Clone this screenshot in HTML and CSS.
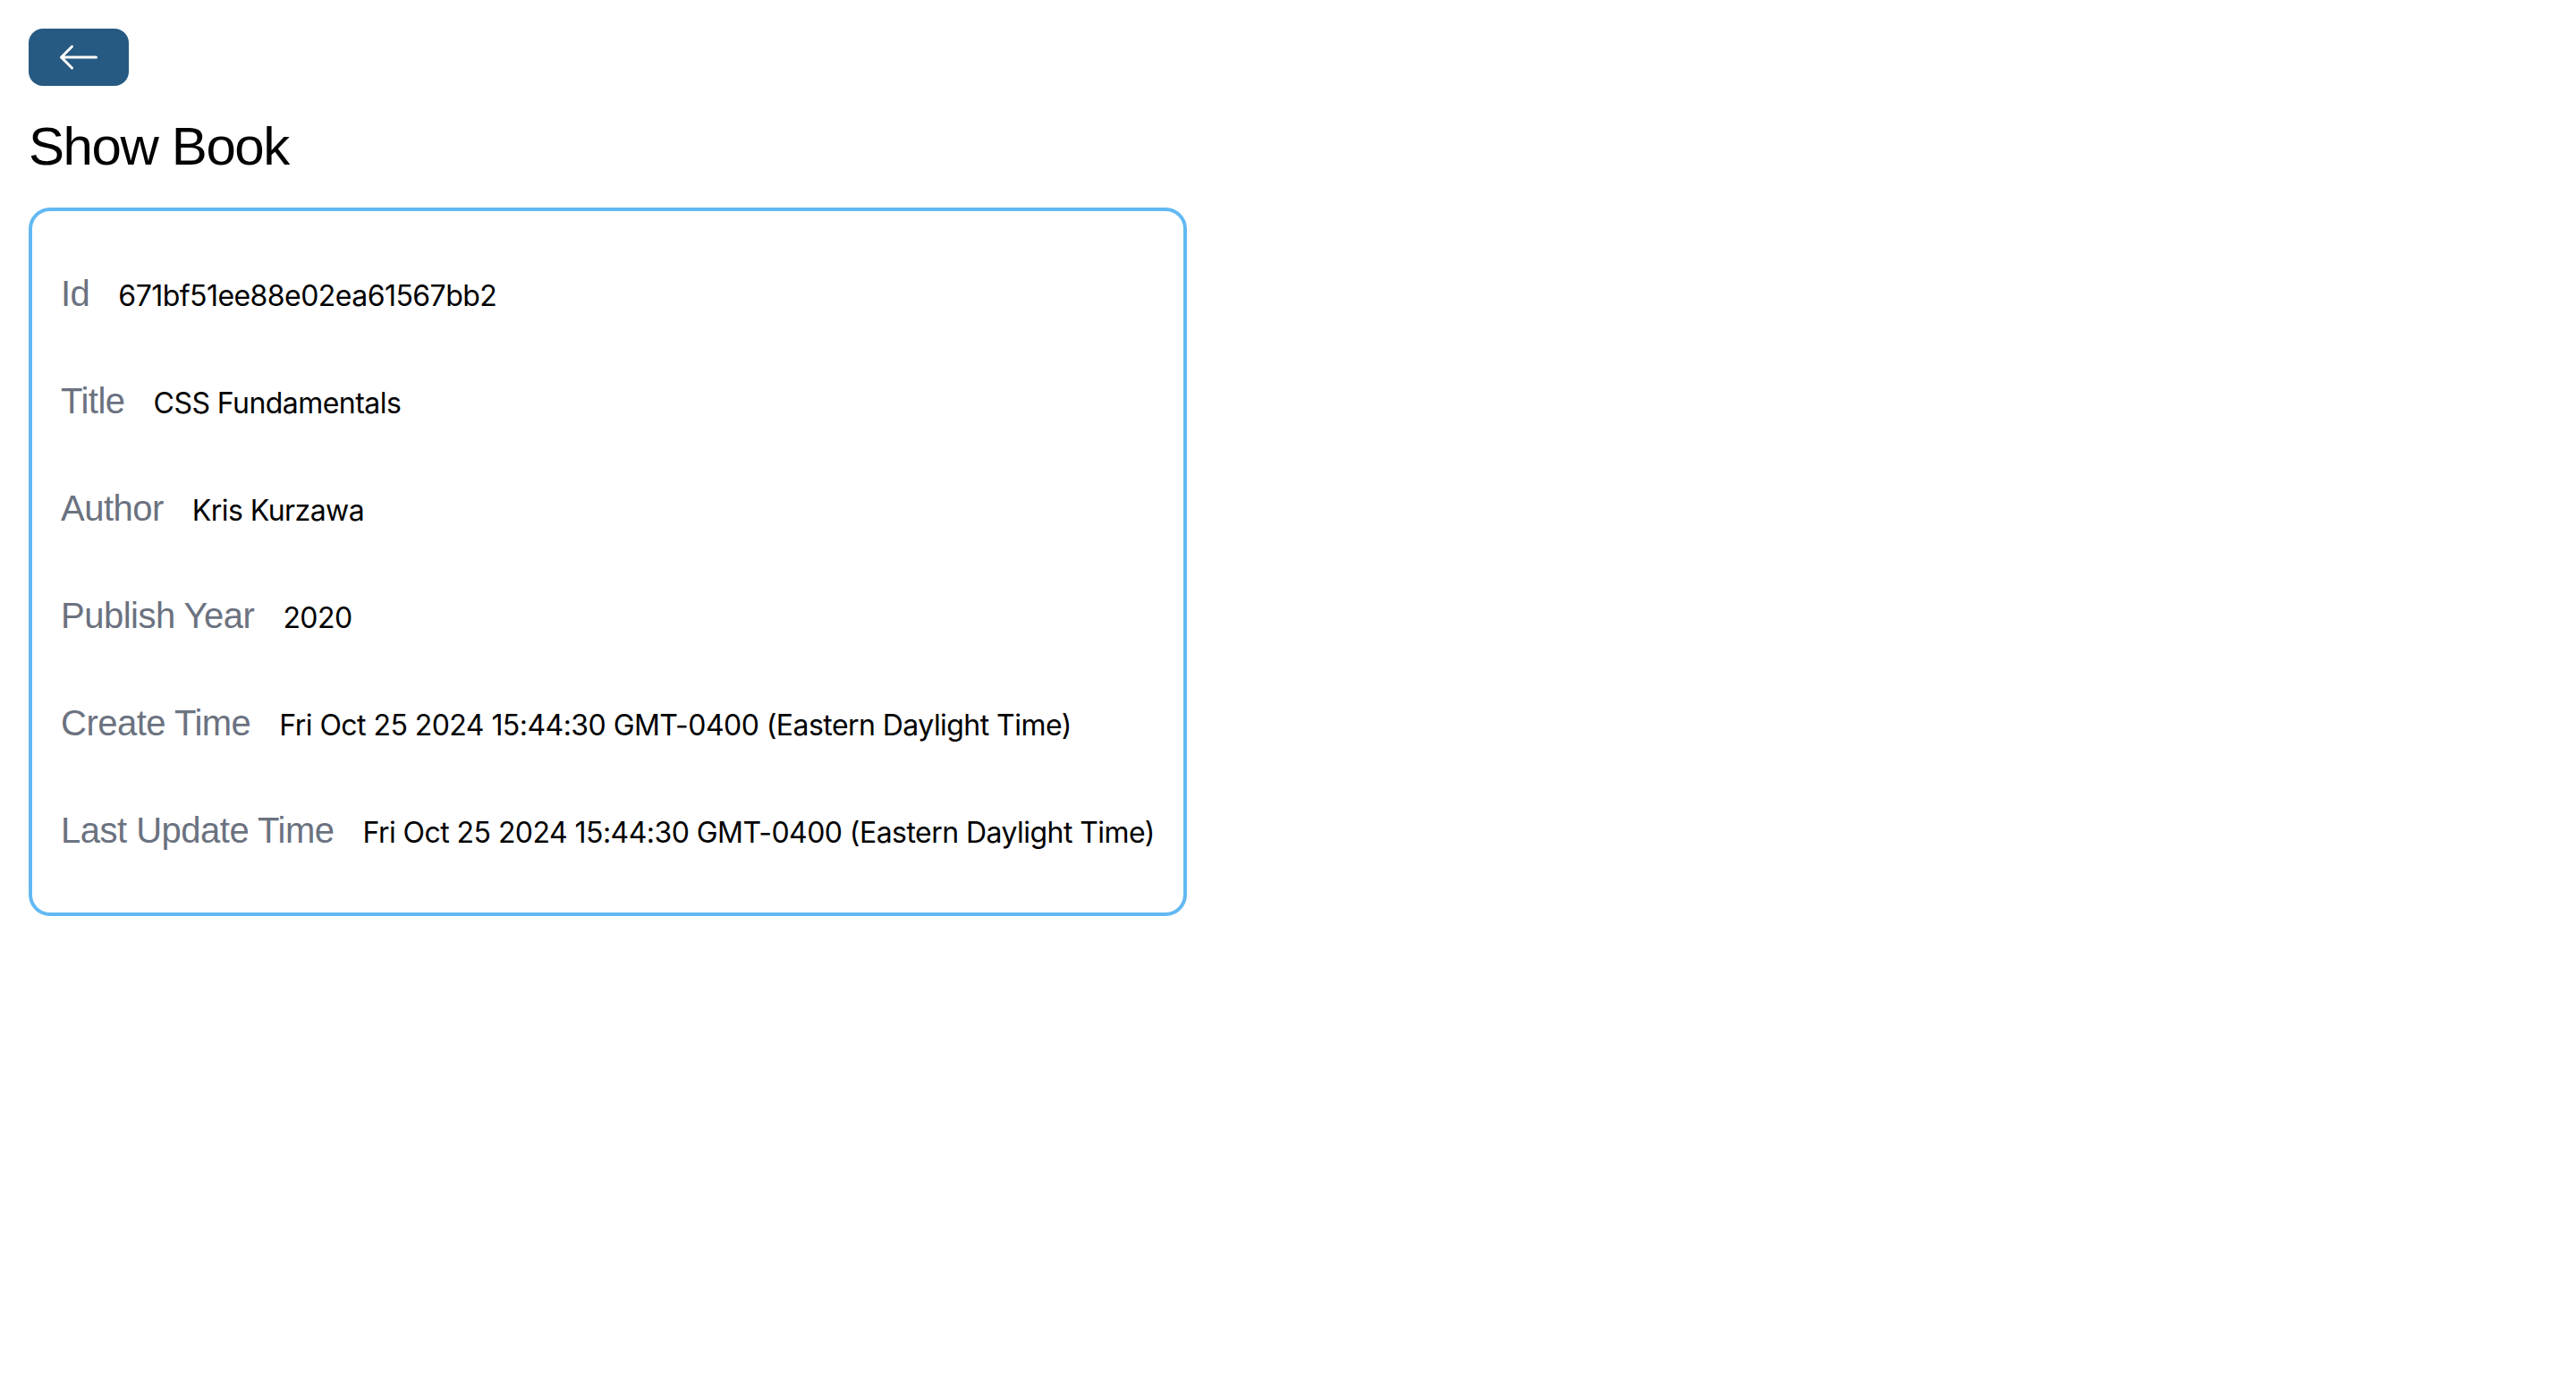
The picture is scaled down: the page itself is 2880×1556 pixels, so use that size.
FILE: index.html
```html
<!DOCTYPE html>
<html>
<head>
<meta charset="utf-8">
<link rel="stylesheet" href="styles.css">
</head>
<body>
<div class="page">
  <div class="back-row">
    <a class="back-btn" href="#">
      <svg class="back-icon" viewBox="0 0 16 16" fill="currentColor"><path fill-rule="evenodd" d="M15 8a.5.5 0 0 0-.5-.5H2.707l3.147-3.146a.5.5 0 1 0-.708-.708l-4 4a.5.5 0 0 0 0 .708l4 4a.5.5 0 0 0 .708-.708L2.707 8.5H14.5A.5.5 0 0 0 15 8z"/></svg>
    </a>
  </div>
  <h1 class="title">Show Book</h1>
  <div class="card">
    <div class="row"><span class="label">Id</span><span class="value">671bf51ee88e02ea61567bb2</span></div>
    <div class="row"><span class="label">Title</span><span class="value">CSS Fundamentals</span></div>
    <div class="row"><span class="label">Author</span><span class="value">Kris Kurzawa</span></div>
    <div class="row"><span class="label">Publish Year</span><span class="value">2020</span></div>
    <div class="row"><span class="label">Create Time</span><span class="value">Fri Oct 25 2024 15:44:30 GMT-0400 (Eastern Daylight Time)</span></div>
    <div class="row"><span class="label">Last Update Time</span><span class="value">Fri Oct 25 2024 15:44:30 GMT-0400 (Eastern Daylight Time)</span></div>
  </div>
</div>
</body>
</html>
```
FILE: styles.css
```css
html, body {
  margin: 0;
  padding: 0;
  background: #ffffff;
}
.page {
  padding: 32px;
  font-family: "Liberation Sans", Arial, sans-serif;
  color: #000;
}
.back-row {
  display: flex;
}
.back-btn {
  display: flex;
  align-items: center;
  justify-content: center;
  background: #265a82;
  color: #ffffff;
  padding: 8px 32px;
  border-radius: 16px;
  width: 48px;
  height: 48px;
}
.back-icon {
  width: 48px;
  height: 48px;
  display: block;
}
.title {
  font-size: 60px;
  line-height: 72px;
  font-weight: 400;
  letter-spacing: -1.4px;
  margin: 32px 0;
}
.card {
  display: flex;
  flex-direction: column;
  width: fit-content;
  border: 4px solid #62b9f2;
  border-radius: 24px;
  padding: 32px;
}
.row {
  display: flex;
  align-items: baseline;
  height: 56px;
  margin: 32px 0;
  white-space: nowrap;
}
.label {
  font-size: 40px;
  line-height: 56px;
  color: #6b7280;
  letter-spacing: -0.5px;
  margin-right: 32px;
}
.value {
  font-family: Inter, "Liberation Sans", sans-serif;
  font-size: 32px;
  line-height: 32px;
  letter-spacing: -0.55px;
}
```
